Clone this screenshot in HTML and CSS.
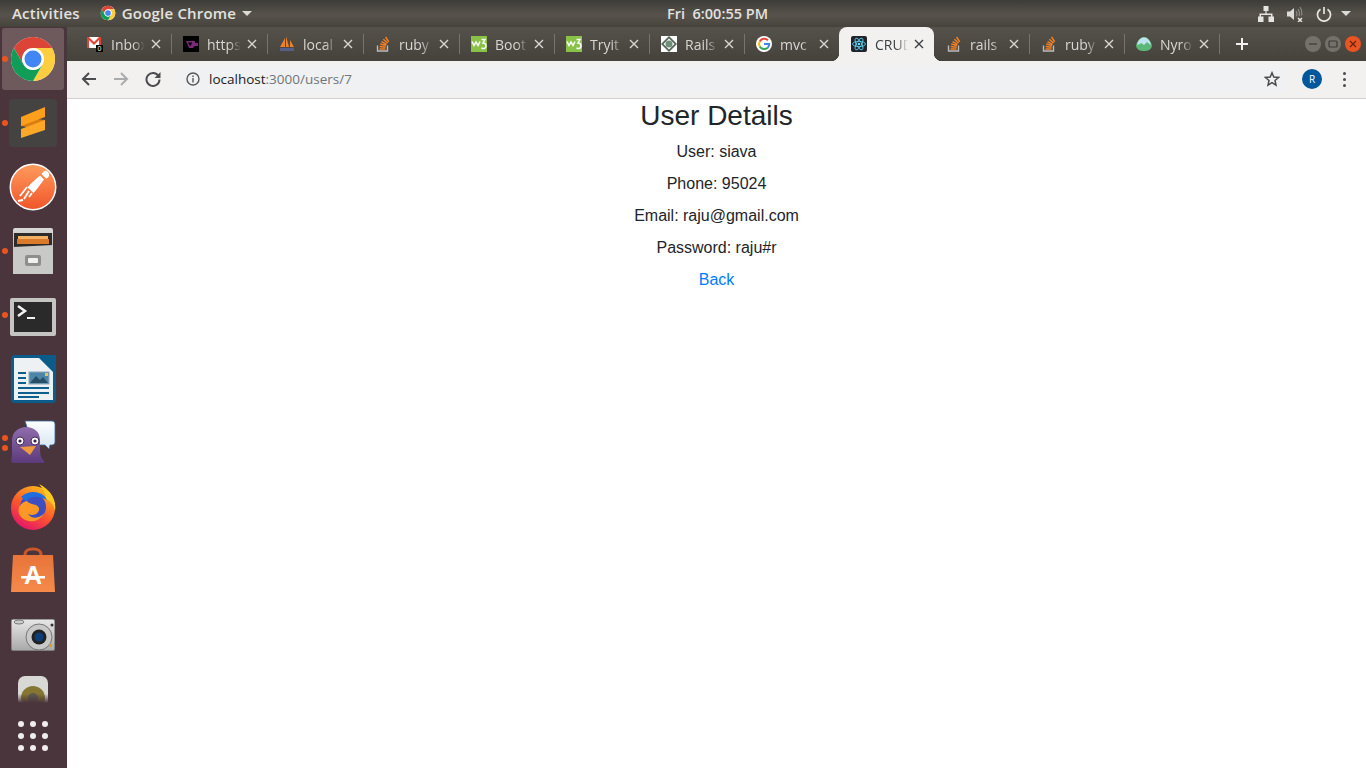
FILE: index.html
```html
<!doctype html>
<html>
	<head>
		<meta charset="utf-8">
		<title>CRUD</title>
		<link rel="stylesheet" href="styles.css">
	</head>
	<body>
		<!-- shared icons -->
		<svg class="defs" width="0" height="0">
			<defs>
				<symbol id="i-chrome" viewBox="0 0 48 48">
					<circle cx="24" cy="24" r="22" fill="#fff"/>
					<path fill="#db4437" d="M4.95 13A22 22 0 0 1 43.05 13H24A11 11 0 0 0 14.47 29.5Z"/>
					<path fill="#ffcd40" transform="rotate(120 24 24)" d="M4.95 13A22 22 0 0 1 43.05 13H24A11 11 0 0 0 14.47 29.5Z"/>
					<path fill="#0f9d58" transform="rotate(240 24 24)" d="M4.95 13A22 22 0 0 1 43.05 13H24A11 11 0 0 0 14.47 29.5Z"/>
					<circle cx="24" cy="24" r="10.5" fill="#fff"/>
					<circle cx="24" cy="24" r="8.5" fill="#4285f4"/>
				</symbol>
				<symbol id="i-so" viewBox="0 0 16 16">
					<path fill="none" stroke="#bcbbbb" stroke-width="1.4" d="M2.5 9.5V15H12.5V9.5"/>
					<path fill="none" stroke="#f48024" stroke-width="1.5" d="M4.5 13H10.5M4.7 10.6L10.6 11.3M5.3 8.1L11 9.6M6.5 5.6L11.6 8.4M8.3 3.2L12.6 7M10.6 1L13.7 5.8"/>
				</symbol>
				<symbol id="i-w3" viewBox="0 0 16 16">
					<rect width="16" height="16" fill="#8ac249"/>
					<path fill="none" stroke="#fff" stroke-width="1.5" d="M1 5.5L3 9.5L5 6L7 9.5L9 5.5"/>
					<path fill="none" stroke="#fff" stroke-width="1.5" d="M10.5 3.5H14L12 7C14 7 15 8.2 15 10S13.5 13 11.5 12.5L10.5 12"/>
				</symbol>
				<symbol id="i-x" viewBox="0 0 10 10">
					<path fill="none" stroke="currentColor" stroke-width="1.4" d="M1 1L9 9M9 1L1 9"/>
				</symbol>
			</defs>
		</svg>

		<div class="topbar">
			<div class="topbar-left">
				<span class="top-label">Activities</span>
				<svg class="top-chrome"><use href="#i-chrome"/></svg>
				<span class="top-label">Google Chrome</span>
				<span class="caret"></span>
			</div>
			<span class="top-label clock">Fri&nbsp; 6:00:55 PM</span>
			<div class="topbar-right">
				<svg class="top-icon" viewBox="0 0 16 16">
					<path fill="#e6e4e0" d="M5.5 0H10.500V5H8.600V7.500H14.500V10.500H16V16H10.500V10.500H13V9H3V10.500H5.500V16H0V10.500H1.500V7.500H7.400V5H5.500Z"/>
				</svg>
				<svg class="top-icon" viewBox="0 0 16 16">
					<path fill="#dedcd8" d="M0 5.500H3L7 2V14L3 10.500H0Z"/>
					<path fill="none" stroke="#8b8984" stroke-width="1.200" d="M9 5C10 6.500 10 9 9 10.500M11 3C12.700 5.500 12.700 8 12 10M13 1C15 4 15 7 14.500 9.500"/>
					<path fill="none" stroke="#e6e4e0" stroke-width="1.500" d="M11 12L15 16M15 12L11 16"/>
				</svg>
				<svg class="top-icon" viewBox="0 0 16 16">
					<path fill="none" stroke="#e6e4e0" stroke-width="1.700" d="M8 1V8M4.500 3.200A6.500 6.500 0 1 0 11.500 3.200"/>
				</svg>
				<span class="caret caret-right"></span>
			</div>
		</div>

		<div class="desktop">
			<div class="dock">
				<ul class="dock-apps">
					<li class="dock-item active">
						<i class="pip"></i>
						<svg class="chrome-big"><use href="#i-chrome"/></svg>
					</li>
					<li class="dock-item">
						<i class="pip"></i>
						<svg class="app" viewBox="0 0 48 48">
							<rect width="48" height="48" rx="4" fill="#444342"/>
							<path fill="#d97e10" d="M12 18V27L36 31V21Z"/>
							<path fill="#ff9f1c" d="M12 18L36 8V18L12 27Z"/>
							<path fill="#ffa726" d="M12 30L36 21V31L12 39Z"/>
						</svg>
					</li>
					<li class="dock-item">
						<svg class="app" viewBox="0 0 48 48">
							<defs>
								<linearGradient id="pm" x1="0" y1="0" x2="0" y2="1">
									<stop offset="0" stop-color="#ff9a5c"/>
									<stop offset="1" stop-color="#f0562a"/>
								</linearGradient>
							</defs>
							<circle cx="24" cy="24" r="23.500" fill="#fff"/>
							<circle cx="24" cy="24" r="22" fill="url(#pm)"/>
							<path fill="#fff" d="M35 8A4 4 0 0 1 40 13A4 4 0 0 1 37 15.500L32.500 11ZM31 12.500L35 16.500L28 26L24.500 30L18.500 24.500L22 20.500Z"/>
							<path fill="none" stroke="#fff" stroke-width="1.800" d="M18 24L11 33M20 28L15 36M23 30L20 34M9 38L14 37"/>
						</svg>
					</li>
					<li class="dock-item">
						<i class="pip"></i>
						<svg class="app" viewBox="0 0 48 48">
							<defs>
								<linearGradient id="cab" x1="0" y1="0" x2="0" y2="1">
									<stop offset="0" stop-color="#d8d8d6"/>
									<stop offset="1" stop-color="#9a9a98"/>
								</linearGradient>
							</defs>
							<rect x="4" y="1" width="40" height="46" rx="2" fill="url(#cab)"/>
							<rect x="5" y="6" width="38" height="16" fill="#2e2c2a"/>
							<rect x="9" y="9" width="30" height="3" fill="#f2b063"/>
							<rect x="8" y="12" width="32" height="5" fill="#dc7a2b"/>
							<path fill="#c9c9c7" d="M4 20L44 18V47H4Z"/>
							<rect x="16" y="28" width="16" height="11" rx="2" fill="#8e8e8c"/>
							<rect x="19" y="31" width="10" height="5" rx="1" fill="#f0f0ee"/>
						</svg>
					</li>
					<li class="dock-item">
						<i class="pip"></i>
						<svg class="app-term" viewBox="0 0 46 38">
							<rect width="46" height="38" rx="2" fill="#c4c4c2"/>
							<rect x="4" y="4" width="38" height="30" fill="#2a2a2a"/>
							<path fill="none" stroke="#f2f2f2" stroke-width="2.500" d="M8 8L15 13L8 18"/>
							<rect x="17" y="19" width="8" height="2" fill="#f2f2f2"/>
						</svg>
					</li>
					<li class="dock-item">
						<svg class="app" viewBox="0 0 48 48">
							<path fill="#0b5c8b" d="M6 0H33L47 14V44A4 4 0 0 1 43 48H6A4 4 0 0 1 2 44V4A4 4 0 0 1 6 0Z"/>
							<path fill="#eef1f3" d="M5 3H30L44 17V45H5Z"/>
							<path fill="#0b5c8b" d="M30 0H47V16Z"/>
							<path fill="#0f5f8e" d="M9 17H17V19H9ZM9 22H17V24H9ZM9 27H17V29H9ZM9 32H40V34H9ZM9 37H40V39H9ZM9 41H30V43H9Z"/>
							<rect x="20" y="17" width="20" height="12" fill="#4d86a8" stroke="#8aa9bd"/>
							<path fill="#284f67" d="M21 28L27 21L31 25L34 22L39 28Z"/>
							<rect x="36" y="18" width="3" height="3" fill="#e8c35a"/>
						</svg>
					</li>
					<li class="dock-item">
						<i class="pip pip-a"></i>
						<i class="pip pip-b"></i>
						<svg class="app" viewBox="0 0 48 48">
							<defs>
								<linearGradient id="bird" x1="0" y1="0" x2="0" y2="1">
									<stop offset="0" stop-color="#8f6cab"/>
									<stop offset="1" stop-color="#5d3a7c"/>
								</linearGradient>
								<linearGradient id="bub" x1="0" y1="0" x2="0" y2="1">
									<stop offset="0" stop-color="#fdfeff"/>
									<stop offset="1" stop-color="#d6e4f2"/>
								</linearGradient>
							</defs>
							<path fill="url(#bub)" stroke="#3c6a99" stroke-width="0.800" d="M16 2H43A3 3 0 0 1 46 5V23A3 3 0 0 1 43 26H41L40 30L36 26H24Z"/>
							<path fill="url(#bird)" d="M4 44C1 44 3 40 3 34V21C3 13 10 8 17 8C25 8 31 13 31 21V29C31 36 32 39 35 42C36 44 35 44 33 44Z"/>
							<circle cx="11" cy="22" r="4" fill="#fff" stroke="#4a2a5e"/>
							<circle cx="26" cy="22" r="4" fill="#fff" stroke="#4a2a5e"/>
							<circle cx="11" cy="22" r="1.600" fill="#3a1f4e"/>
							<circle cx="26" cy="22" r="1.600" fill="#3a1f4e"/>
							<path fill="#ef9a3c" d="M11 28L27 27L21 36Z"/>
						</svg>
					</li>
					<li class="dock-item">
						<svg class="app" viewBox="0 0 48 48">
							<defs>
								<linearGradient id="ff" x1="0.8" y1="0.1" x2="0.3" y2="1">
									<stop offset="0" stop-color="#ffb31f"/>
									<stop offset="0.5" stop-color="#ff5a2a"/>
									<stop offset="1" stop-color="#e3146b"/>
								</linearGradient>
							</defs>
							<circle cx="24" cy="25" r="22" fill="url(#ff)"/>
							<path fill="#ffc91f" d="M30 1C40 6 48 15 46 28C45 22 41 18 37 16C37 11 34 6 30 1Z"/>
							<circle cx="24" cy="24" r="13" fill="#3d4fc0"/>
							<path fill="#1f6fe0" d="M12 14C20 6 34 8 38 17C32 13 22 12 17 18Z"/>
							<path fill="#ff9726" d="M18 18C20 22 28 20 30 25C31 30 25 34 19 31C22 36 31 36 35 30C32 38 20 42 12 34C7 28 10 20 18 18Z"/>
						</svg>
					</li>
					<li class="dock-item">
						<svg class="app" viewBox="0 0 48 48">
							<defs>
								<linearGradient id="bag" x1="0" y1="0" x2="0" y2="1">
									<stop offset="0" stop-color="#e8743a"/>
									<stop offset="1" stop-color="#f58a4b"/>
								</linearGradient>
							</defs>
							<path fill="none" stroke="#c9572a" stroke-width="3" d="M16 18V8C16 3 19 2 24 2S32 3 32 8V18"/>
							<path fill="url(#bag)" d="M4 8H44L46 45H2Z"/>
							<text class="bag-letter" x="24" y="37" text-anchor="middle">A</text>
							<rect x="12" y="29" width="24" height="2.500" fill="#fff"/>
						</svg>
					</li>
					<li class="dock-item">
						<svg class="app-cam" viewBox="0 0 44 32">
							<defs>
								<linearGradient id="cam" x1="0" y1="0" x2="0" y2="1">
									<stop offset="0" stop-color="#e8e8e8"/>
									<stop offset="1" stop-color="#a8a8a8"/>
								</linearGradient>
							</defs>
							<rect width="44" height="32" rx="2" fill="url(#cam)" stroke="#555"/>
							<ellipse cx="8" cy="3" rx="5" ry="2" fill="#ccc" stroke="#777"/>
							<circle cx="28" cy="18" r="13" fill="#c8c8c8" stroke="#777"/>
							<circle cx="28" cy="18" r="7.500" fill="#222"/>
							<circle cx="28" cy="18" r="4.500" fill="#0d3d78"/>
							<circle cx="41" cy="6" r="1.500" fill="#333"/>
							<rect x="38" y="25" width="3" height="3" fill="#e09a28"/>
						</svg>
					</li>
					<li class="dock-item dock-fade">
						<svg class="app" viewBox="0 0 48 48">
							<rect x="9" y="1" width="30" height="46" rx="7" fill="#d8d8d4"/>
							<circle cx="24" cy="23" r="12" fill="#857632"/>
							<circle cx="24" cy="23" r="5" fill="#5d5a50"/>
						</svg>
					</li>
				</ul>
				<div class="show-apps">
					<i></i><i></i><i></i><i></i><i></i><i></i><i></i><i></i><i></i>
				</div>
			</div>

			<div class="browser">
				<div class="tabstrip">
					<div class="tab wide">
						<svg class="favicon" viewBox="0 0 16 16">
							<rect y="1" width="14" height="11" fill="#fff"/>
							<path fill="#db4437" d="M0 1H2L7 6L12 1H14V12H12V4L7 9L2 4V12H0Z"/>
							<rect x="9" y="9" width="7" height="7" fill="#000"/>
							<text class="badge" x="12.500" y="15" text-anchor="middle">0</text>
						</svg>
						<span class="tab-title">Inbox</span>
						<svg class="tab-x"><use href="#i-x"/></svg>
					</div>
					<div class="tab wide">
						<svg class="favicon" viewBox="0 0 16 16">
							<rect width="16" height="16" fill="#000"/>
							<path fill="#7b2a78" d="M3 5H12V7H15V10H11.500L10 12H6Z"/>
							<path fill="#000" d="M5 6.500H9L8 9.500H6.500Z"/>
						</svg>
						<span class="tab-title">https</span>
						<svg class="tab-x"><use href="#i-x"/></svg>
					</div>
					<div class="tab wide">
						<svg class="favicon" viewBox="0 0 16 16">
							<path fill="#e8832a" d="M1 11L6 2V11ZM7 11V0L10 11ZM11 11V4L15 11Z"/>
							<rect x="1" y="12" width="14" height="3" fill="#55608a"/>
						</svg>
						<span class="tab-title">local</span>
						<svg class="tab-x"><use href="#i-x"/></svg>
					</div>
					<div class="tab wide">
						<svg class="favicon"><use href="#i-so"/></svg>
						<span class="tab-title">ruby</span>
						<svg class="tab-x"><use href="#i-x"/></svg>
					</div>
					<div class="tab">
						<svg class="favicon"><use href="#i-w3"/></svg>
						<span class="tab-title">Boot</span>
						<svg class="tab-x"><use href="#i-x"/></svg>
					</div>
					<div class="tab">
						<svg class="favicon"><use href="#i-w3"/></svg>
						<span class="tab-title">Tryit</span>
						<svg class="tab-x"><use href="#i-x"/></svg>
					</div>
					<div class="tab">
						<svg class="favicon" viewBox="0 0 16 16">
							<rect width="16" height="16" fill="#fff"/>
							<path fill="#55655a" d="M8 0L16 8L8 16L0 8Z"/>
							<path fill="#fff" d="M8 2.500L13.500 8L8 13.500L2.500 8Z"/>
							<circle cx="8" cy="8" r="3.500" fill="#6f8f78"/>
						</svg>
						<span class="tab-title">Rails</span>
						<svg class="tab-x"><use href="#i-x"/></svg>
					</div>
					<div class="tab no-sep">
						<svg class="favicon" viewBox="0 0 16 16">
							<circle cx="8" cy="8" r="8" fill="#fff"/>
							<path fill="none" stroke="#ea4335" stroke-width="2" d="M12 4.300A5.200 5.200 0 0 0 3.700 5.500"/>
							<path fill="none" stroke="#fbbc05" stroke-width="2" d="M3.700 5.500A5.200 5.200 0 0 0 3.700 10.500"/>
							<path fill="none" stroke="#34a853" stroke-width="2" d="M3.700 10.500A5.200 5.200 0 0 0 11.700 11.700"/>
							<path fill="none" stroke="#4285f4" stroke-width="2" d="M8 8H13.200A5.200 5.200 0 0 1 11.700 11.700"/>
						</svg>
						<span class="tab-title">mvc</span>
						<svg class="tab-x"><use href="#i-x"/></svg>
					</div>
					<div class="tab current no-sep">
						<svg class="favicon" viewBox="0 0 16 16">
							<rect width="16" height="16" rx="2" fill="#20232a"/>
							<g fill="none" stroke="#61dafb" stroke-width="0.800">
								<ellipse cx="8" cy="8" rx="6.500" ry="2.600"/>
								<ellipse cx="8" cy="8" rx="6.500" ry="2.600" transform="rotate(60 8 8)"/>
								<ellipse cx="8" cy="8" rx="6.500" ry="2.600" transform="rotate(120 8 8)"/>
							</g>
							<circle cx="8" cy="8" r="1.300" fill="#61dafb"/>
						</svg>
						<span class="tab-title">CRUD</span>
						<svg class="tab-x"><use href="#i-x"/></svg>
					</div>
					<div class="tab">
						<svg class="favicon"><use href="#i-so"/></svg>
						<span class="tab-title">rails</span>
						<svg class="tab-x"><use href="#i-x"/></svg>
					</div>
					<div class="tab">
						<svg class="favicon"><use href="#i-so"/></svg>
						<span class="tab-title">ruby</span>
						<svg class="tab-x"><use href="#i-x"/></svg>
					</div>
					<div class="tab">
						<svg class="favicon" viewBox="0 0 16 16">
							<path fill="#5cb878" d="M0 10C1 4 5 1 8 1S15 4 16 10C15 14 12 15 8 15S1 14 0 10Z"/>
							<path fill="#bfe3ef" d="M1 9C2 4 5 1.500 8 1.500S14 4 15 9C13 8 12 7 11 6L8 9L5 7C4 8 3 8.500 1 9Z"/>
						</svg>
						<span class="tab-title">Nyro</span>
						<svg class="tab-x"><use href="#i-x"/></svg>
					</div>
					<svg class="new-tab" viewBox="0 0 12 12">
						<path fill="none" stroke="#f1f0ee" stroke-width="2" d="M6 0V12M0 6H12"/>
					</svg>
					<div class="win-btns">
						<span class="win-btn">
							<svg viewBox="0 0 10 10"><path fill="none" stroke="#3b3a37" stroke-width="1.200" d="M1 5H9"/></svg>
						</span>
						<span class="win-btn">
							<svg viewBox="0 0 10 10"><rect x="1" y="2" width="8" height="6" rx="1" fill="none" stroke="#3b3a37" stroke-width="1.200"/></svg>
						</span>
						<span class="win-btn close">
							<svg viewBox="0 0 10 10"><path fill="none" stroke="#5d2512" stroke-width="1.200" d="M2 2L8 8M8 2L2 8"/></svg>
						</span>
					</div>
				</div>

				<div class="toolbar">
					<svg class="tool-icon" viewBox="0 0 16 16">
						<path fill="none" stroke="#4a4c4f" stroke-width="2" d="M15 8H2M8 2L2 8L8 14"/>
					</svg>
					<svg class="tool-icon" viewBox="0 0 16 16">
						<path fill="none" stroke="#a9abad" stroke-width="2" d="M1 8H14M8 2L14 8L8 14"/>
					</svg>
					<svg class="tool-icon" viewBox="0 0 16 16">
						<path fill="none" stroke="#4a4c4f" stroke-width="2" d="M13.500 5A6.500 6.500 0 1 0 14.500 8.500"/>
						<path fill="#4a4c4f" d="M15.500 1V7H9.500Z"/>
					</svg>
					<div class="omnibox">
						<svg class="info" viewBox="0 0 14 14">
							<circle cx="7" cy="7" r="6" fill="none" stroke="#55585b" stroke-width="1.400"/>
							<path fill="#55585b" d="M6.300 6H7.700V10.500H6.300ZM6.300 3.500H7.700V5H6.300Z"/>
						</svg>
						<span class="url"><b>localhost</b>:3000/users/7</span>
						<svg class="star" viewBox="0 0 16 16">
							<path fill="none" stroke="#4a4c4f" stroke-width="1.500" d="M8 1.800L9.800 6.100L14.500 6.500L11 9.500L12 14.100L8 11.700L4 14.100L5 9.500L1.500 6.500L6.200 6.100Z"/>
						</svg>
					</div>
					<span class="avatar">R</span>
					<span class="kebab"><i></i><i></i><i></i></span>
				</div>

				<div class="page">
					<h3>User Details</h3>
					<p>User: siava</p>
					<p>Phone: 95024</p>
					<p>Email: raju@gmail.com</p>
					<p>Password: raju#r</p>
					<a href="#">Back</a>
				</div>
			</div>
		</div>
	</body>
</html>
```
FILE: styles.css
```css
* {
	margin: 0;
	padding: 0;
	box-sizing: border-box;
}
html, body {
	height: 100%;
	overflow: hidden;
}
body {
	background: #fff;
	font-family: "Liberation Sans", Arial, sans-serif;
}
ul {
	list-style-type: none;
}
.defs {
	display: block;
	height: 0;
}

/* top panel */
.topbar {
	display: flex;
	align-items: center;
	height: 27px;
	background: linear-gradient(#3d3c38, #57534c 55%, #46433d);
	color: #e4e2de;
}
.topbar-left {
	display: flex;
	align-items: center;
	width: 667px;
	padding-left: 12px;
	padding-bottom: 1px;
}
.top-label {
	font-family: "Open Sans", sans-serif;
	font-size: 15px;
	font-weight: 600;
	letter-spacing: 0.2px;
	white-space: pre;
}
.clock {
	font-size: 14.5px;
	letter-spacing: 0;
}
.top-chrome {
	width: 16px;
	height: 16px;
	margin: 0 6px 0 20px;
}
.caret {
	width: 0;
	height: 0;
	margin-left: 6px;
	border-left: 5px solid transparent;
	border-right: 5px solid transparent;
	border-top: 5px solid #dcdad6;
}
.topbar-right {
	display: flex;
	align-items: center;
	margin-left: auto;
	padding-right: 15px;
	gap: 13px;
}
.top-icon {
	width: 16px;
	height: 16px;
}
.caret-right {
	margin-left: -4px;
}

.desktop {
	display: flex;
	height: 741px;
}

/* launcher */
.dock {
	display: flex;
	flex-direction: column;
	flex: 0 0 67px;
	background: #4a353c;
}
.dock-apps {
	flex: 1;
	overflow: hidden;
}
.dock-item {
	position: relative;
	display: flex;
	align-items: center;
	justify-content: center;
	width: 67px;
	height: 64px;
	padding-right: 1px;
}
.dock-item.active::before {
	content: "";
	position: absolute;
	left: 2px;
	top: 1px;
	width: 62px;
	height: 62px;
	border-radius: 3px;
	background: #6e5a5d;
}
.chrome-big {
	position: relative;
	width: 48px;
	height: 48px;
}
.app {
	width: 48px;
	height: 48px;
}
.app-term {
	width: 46px;
	height: 38px;
	margin-top: 4px;
}
.app-cam {
	width: 44px;
	height: 32px;
}
.dock-fade {
	-webkit-mask-image: linear-gradient(#000 42%, transparent 56%);
	mask-image: linear-gradient(#000 42%, transparent 56%);
}
.pip {
	position: absolute;
	left: 2px;
	top: 29px;
	width: 6px;
	height: 6px;
	border-radius: 50%;
	background: #e95420;
}
.pip-a {
	top: 24px;
}
.pip-b {
	top: 34px;
}
.bag-letter {
	font-family: "Liberation Sans", sans-serif;
	font-size: 25px;
	font-weight: bold;
	fill: #fff;
}
.show-apps {
	display: grid;
	grid-template-columns: repeat(3, 6px);
	grid-auto-rows: 6px;
	gap: 6px;
	justify-content: center;
	align-content: center;
	flex: 0 0 64px;
	padding-right: 1px;
}
.show-apps i {
	border-radius: 50%;
	background: #efeded;
}

/* chrome window */
.browser {
	display: flex;
	flex-direction: column;
	flex: 1;
	min-width: 0;
}
.tabstrip {
	display: flex;
	align-items: stretch;
	height: 34px;
	padding-left: 8px;
	background: linear-gradient(#55514b, #45423c);
}
.tab {
	position: relative;
	display: flex;
	align-items: center;
	flex: 0 0 95px;
	min-width: 0;
	padding-left: 12px;
	font-family: "Open Sans", sans-serif;
	font-size: 14px;
	color: #d8d6d2;
}
.tab.wide {
	flex-basis: 96px;
}
.tab::after {
	content: "";
	position: absolute;
	right: -1px;
	top: 7px;
	bottom: 7px;
	width: 1px;
	background: #77746e;
}
.tab.no-sep::after {
	display: none;
}
.tab.current {
	border-radius: 8px 8px 0 0;
	background: #f2f1f0;
	color: #3c4043;
}
.tab.current::before,
.tab.current::after {
	content: "";
	display: block;
	position: absolute;
	top: auto;
	bottom: 0;
	width: 8px;
	height: 8px;
}
.tab.current::before {
	left: -8px;
	background: radial-gradient(circle at 0 0, transparent 8px, #f2f1f0 8.5px);
}
.tab.current::after {
	right: -8px;
	background: radial-gradient(circle at 100% 0, transparent 8px, #f2f1f0 8.5px);
}
.favicon {
	flex: 0 0 16px;
	width: 16px;
	height: 16px;
	margin-right: 8px;
}
.badge {
	font-family: "Liberation Sans", sans-serif;
	font-size: 7px;
	fill: #fff;
}
.tab-title {
	flex: 1;
	min-width: 0;
	margin-right: 6px;
	overflow: hidden;
	white-space: nowrap;
	-webkit-mask-image: linear-gradient(90deg, #000 65%, transparent);
	mask-image: linear-gradient(90deg, #000 65%, transparent);
}
.tab-x {
	flex: 0 0 10px;
	width: 10px;
	height: 10px;
	margin-right: 10px;
}
.new-tab {
	align-self: center;
	width: 12px;
	height: 12px;
	margin-left: 17px;
}
.win-btns {
	display: flex;
	align-items: center;
	gap: 4px;
	margin-left: auto;
	padding-right: 5px;
}
.win-btn {
	display: flex;
	align-items: center;
	justify-content: center;
	width: 16px;
	height: 16px;
	border-radius: 50%;
	background: #74716b;
}
.win-btn svg {
	width: 10px;
	height: 10px;
}
.win-btn.close {
	background: #e95420;
}

.toolbar {
	display: flex;
	align-items: center;
	height: 38px;
	padding-left: 14px;
	padding-bottom: 1px;
	border-bottom: 1px solid #d0d0d0;
	background: #f2f1f0;
}
.tool-icon {
	width: 16px;
	height: 16px;
	margin-right: 16px;
}
.omnibox {
	display: flex;
	align-items: center;
	width: 1112px;
	height: 28px;
	padding-left: 9px;
	padding-right: 9px;
	border-radius: 14px;
	background: #eff1f2;
}
.info {
	width: 14px;
	height: 14px;
	margin-right: 9px;
}
.url {
	flex: 1;
	font-family: "Open Sans", sans-serif;
	font-size: 13.5px;
	color: #70757a;
}
.url b {
	font-weight: normal;
	color: #202124;
}
.star {
	width: 16px;
	height: 16px;
}
.avatar {
	width: 20px;
	height: 20px;
	margin-left: 13px;
	border-radius: 50%;
	background: #01579b;
	color: #fff;
	font-family: "Open Sans", sans-serif;
	font-size: 10px;
	line-height: 20px;
	text-align: center;
}
.kebab {
	display: flex;
	flex-direction: column;
	gap: 3px;
	margin-left: 21px;
}
.kebab i {
	width: 3px;
	height: 3px;
	border-radius: 50%;
	background: #4a4c4f;
}

/* page content */
.page {
	flex: 1;
	background: #fff;
	color: #212529;
	font-size: 16px;
	line-height: 24px;
	text-align: center;
}
.page h3 {
	margin-bottom: 7px;
	font-size: 28px;
	font-weight: 500;
	line-height: 33.6px;
}
.page p {
	margin-bottom: 8px;
}
.page a {
	color: #007bff;
	text-decoration: none;
}
```
